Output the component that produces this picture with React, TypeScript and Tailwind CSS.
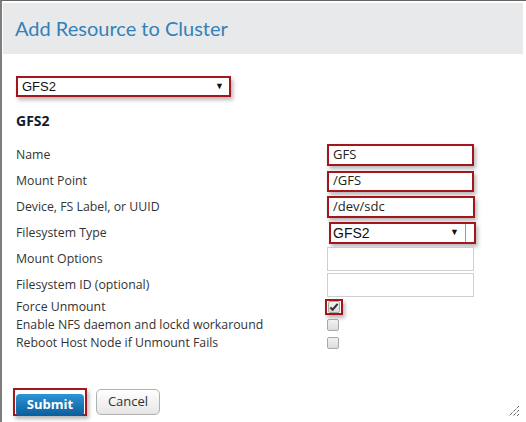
import React from 'react';

const RED = 'border-2 border-[#a3161b] shadow-[2px_3px_4px_rgba(0,0,0,0.28)]';

function Row({ label, children, h = 'h-[26px]' }: { label: string; children?: React.ReactNode; h?: string }) {
  return (
    <div className={`flex items-center ${h}`}>
      <div className="w-[311px] text-[12.3px] text-[#333] leading-none">{label}</div>
      <div className="flex items-center">{children}</div>
    </div>
  );
}

function Box({ red, h, w = 'w-[147px]', value }: { red?: boolean; h: string; w?: string; value?: string }) {
  return (
    <div
      className={`${w} ${h} flex items-center pl-[4px] text-[13px] text-[#222] bg-white ${
        red ? RED : 'border border-[#cfcfcf]'
      }`}
    >
      {value}
    </div>
  );
}

function Check({ checked }: { checked?: boolean }) {
  return (
    <div className="w-[12px] h-[12px] rounded-[2px] border border-[#a8a8a8] bg-gradient-to-b from-[#f2f2f2] to-[#dcdcdc] flex items-center justify-center">
      {checked && (
        <svg width="11" height="10" viewBox="0 0 11 10">
          <path d="M1.5 5.5 L4 8 L9.5 1.5" fill="none" stroke="#333" strokeWidth="2.2" />
        </svg>
      )}
    </div>
  );
}

export default function App() {
  return (
    <div className="w-[526px] h-[422px] bg-white border-t border-t-[#666] border-l-2 border-l-[#7d7d7d] relative overflow-hidden font-['Open_Sans',sans-serif]">
      <div className="mt-[2px] ml-px mr-[3px] h-[51px] bg-[#e8e9ea] flex items-center pl-[12px] pb-[2px]">
        <h1 className="text-[20px] text-[#3481b8] font-['Lato',sans-serif]">Add Resource to Cluster</h1>
      </div>

      <div className="pl-[14px]">
        <div className={`mt-[22px] w-[215px] h-[21px] ${RED} flex items-center justify-between pl-[4px] pr-[5px] font-['Liberation_Sans',sans-serif] text-[13px] text-[#111]`}>
          <span>GFS2</span>
          <span className="text-[9px]">▼</span>
        </div>

        <div className="mt-[14px] h-[18px] flex items-center text-[14px] font-bold text-[#141a2a]">GFS2</div>

        <div className="mt-[13px]">
          <Row label="Name">
            <Box red h="h-[22px]" value="GFS" />
          </Row>
          <Row label="Mount Point">
            <Box red h="h-[21px]" value="/GFS" />
          </Row>
          <Row label="Device, FS Label, or UUID">
            <Box red h="h-[22px]" w="w-[148px]" value="/dev/sdc" />
          </Row>
          <Row label="Filesystem Type">
            <div className={`w-[147px] h-[22px] ml-[2px] ${RED} bg-white`}>
              <div className="w-[135px] h-full border-r border-[#9a9a9a] flex items-center justify-between pl-[2px] pr-[6px] font-['Liberation_Sans',sans-serif] text-[14px] text-[#111]">
                <span>GFS2</span>
                <span className="text-[9px]">▼</span>
              </div>
            </div>
          </Row>
          <Row label="Mount Options">
            <Box h="h-[24px]" />
          </Row>
          <Row label="Filesystem ID (optional)">
            <Box h="h-[24px]" />
          </Row>
          <Row label="Force Unmount" h="h-[18px]">
            <div className={`w-[18px] h-[16px] -ml-[2px] ${RED} flex items-center justify-center`}>
              <Check checked />
            </div>
          </Row>
          <Row label="Enable NFS daemon and lockd workaround" h="h-[18px]">
            <Check />
          </Row>
          <Row label="Reboot Host Node if Unmount Fails" h="h-[18px]">
            <Check />
          </Row>
        </div>

        <div className="mt-[36px] flex items-center gap-[9px] -ml-[3px]">
          <div className={`w-[74px] h-[28px] ${RED} p-px`}>
            <button className="w-full h-full rounded-[4px] bg-gradient-to-b from-[#2c95d6] to-[#0b5d9c] text-white text-[13px] font-bold">
              Submit
            </button>
          </div>
          <button className="w-[64px] h-[26px] rounded-[5px] border border-[#b0b0b0] bg-gradient-to-b from-white to-[#e6e6e6] text-[13px] text-[#333]">
            Cancel
          </button>
        </div>
      </div>

      <svg className="absolute right-[6px] bottom-[5px]" width="12" height="12" viewBox="0 0 12 12">
        <path d="M11 1 L1 11 M11 5 L5 11 M11 9 L9 11" stroke="#222" strokeWidth="1" strokeDasharray="1 1" />
      </svg>
    </div>
  );
}
